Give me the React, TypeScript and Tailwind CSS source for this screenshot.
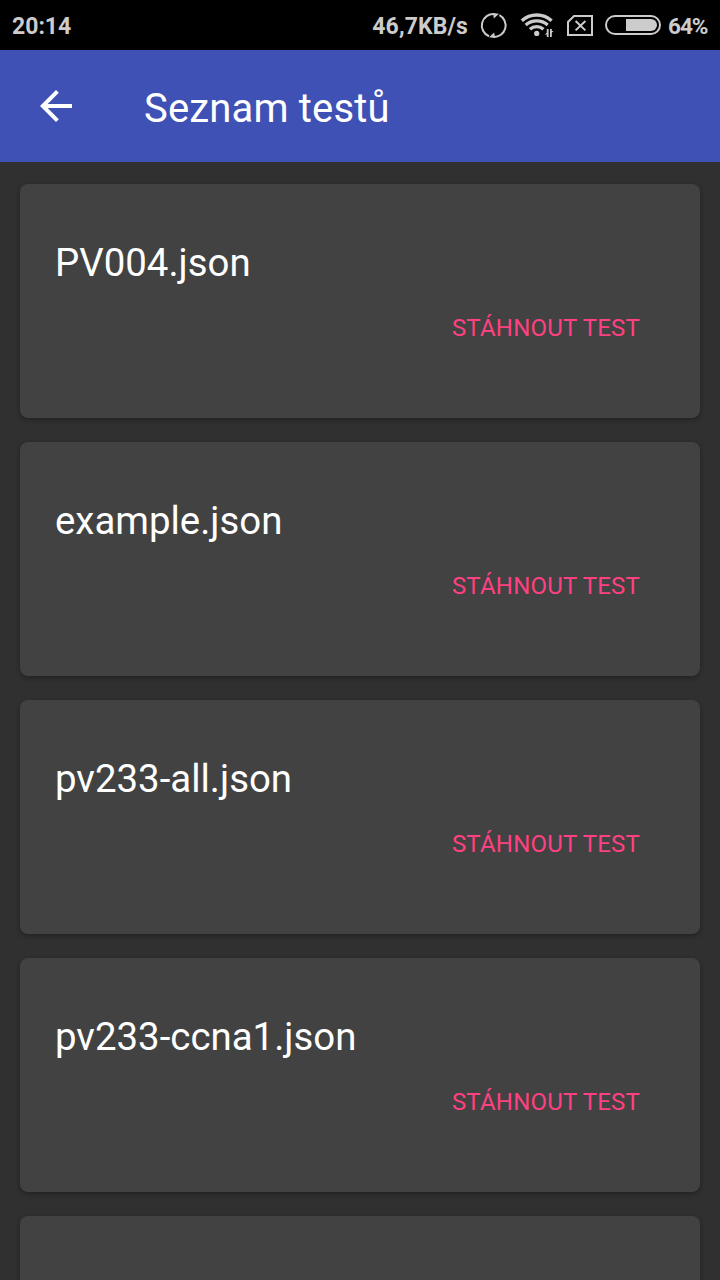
import React from "react";

const tests = ["PV004.json", "example.json", "pv233-all.json", "pv233-ccna1.json", "pv233-ccna2.json"];

function SyncIcon() {
  return (
    <svg className="ml-[12px] h-[28px] w-[28px] shrink-0" viewBox="0 0 28 28" fill="none" stroke="#cccccc" strokeWidth="2">
      <path d="M9 25.2A11.5 11.5 0 0 1 14.5 3.1" />
      <path d="M19.4 4.2A11.5 11.5 0 0 1 13.5 25.9" />
      <path d="M13 2L19 2.8L13.8 7.6Z" fill="#cccccc" stroke="none" />
      <path d="M15 27L9 26.2L14.2 21.4Z" fill="#cccccc" stroke="none" />
    </svg>
  );
}

function WifiIcon() {
  return (
    <svg className="ml-[12px] h-[26px] w-[34px] shrink-0" viewBox="0 0 34 26" fill="none" stroke="#cccccc" strokeWidth="3.3">
      <path d="M1.8 8.8A22 22 0 0 1 31.6 8.8" />
      <path d="M5.7 13A17 17 0 0 1 27.7 13" />
      <path d="M9.9 17.3A10.2 10.2 0 0 1 23.5 17.3" />
      <circle cx="16.7" cy="21.4" r="2.6" fill="#cccccc" stroke="none" />
      <path d="M27.7 17V25M30.9 17V25" strokeWidth="1.8" />
      <path d="M24.8 22.4L27.7 20V22.4ZM33.6 19L30.9 21.4V19Z" fill="#cccccc" stroke="none" />
    </svg>
  );
}

function NoSimIcon() {
  return (
    <svg className="mt-[2px] ml-[13px] h-[22px] w-[26px] shrink-0" viewBox="0 0 26 22" fill="none" stroke="#cccccc" strokeWidth="2">
      <path d="M7 1H25V20H1V7Z" />
      <path d="M8.6 6L18.4 15.4M18.4 6L8.6 15.4" />
    </svg>
  );
}

function BatteryIcon() {
  return (
    <svg className="ml-[12px] h-[20px] w-[56px] shrink-0" viewBox="0 0 56 20" fill="none">
      <rect x="1" y="1" width="54" height="18" rx="9" stroke="#cccccc" strokeWidth="2" />
      <path d="M21 4H46A6 6 0 0 1 46 16H21Z" fill="#cccccc" />
    </svg>
  );
}

function StatusBar() {
  return (
    <header className="flex h-[50px] shrink-0 items-center bg-black pr-[12px] pl-[12px] text-[23px] leading-[30px] font-bold text-[#cccccc]">
      <span className="pt-[4px]">20:14</span>
      <span className="ml-auto pt-[4px] tracking-[0.1px]">46,7KB/s</span>
      <SyncIcon />
      <WifiIcon />
      <NoSimIcon />
      <BatteryIcon />
      <span className="ml-[7px] w-[40px] pt-[2px] text-[22.5px] tracking-[-1px]">64%</span>
    </header>
  );
}

function TestCard({ name }: { name: string }) {
  return (
    <li className="flex h-[234px] shrink-0 flex-col rounded-[8px] bg-[#424242] pt-[56px] pr-[60px] pl-[35px] shadow-[0_2px_5px_rgba(0,0,0,0.3)]">
      <h2 className="text-[38.4px] leading-[46px] whitespace-nowrap">{name}</h2>
      <button className="mt-[27px] self-end text-[24px] leading-[30px] tracking-[0.2px] whitespace-nowrap text-[#ff4081]">STÁHNOUT TEST</button>
    </li>
  );
}

export default function App() {
  return (
    <div className="flex h-[1280px] w-[720px] flex-col overflow-hidden bg-[#303030] font-['Roboto',sans-serif] text-white">
      <StatusBar />
      <nav className="flex h-[112px] shrink-0 items-center bg-[#3f51b5] pl-[32px]">
        <button aria-label="Zpět" className="h-[48px] w-[48px]">
          <svg viewBox="0 0 24 24" className="h-[48px] w-[48px]" fill="white">
            <path d="M20 11H7.83l5.59-5.59L12 4l-8 8 8 8 1.41-1.41L7.83 13H20v-2z" />
          </svg>
        </button>
        <h1 className="ml-[64px] pt-[6px] text-[40px] leading-[48px] tracking-[0.17px]">Seznam testů</h1>
      </nav>
      <ul className="flex min-h-0 flex-1 flex-col gap-[24px] px-[20px] pt-[22px]">
        {tests.map((name) => (
          <TestCard key={name} name={name} />
        ))}
      </ul>
    </div>
  );
}
